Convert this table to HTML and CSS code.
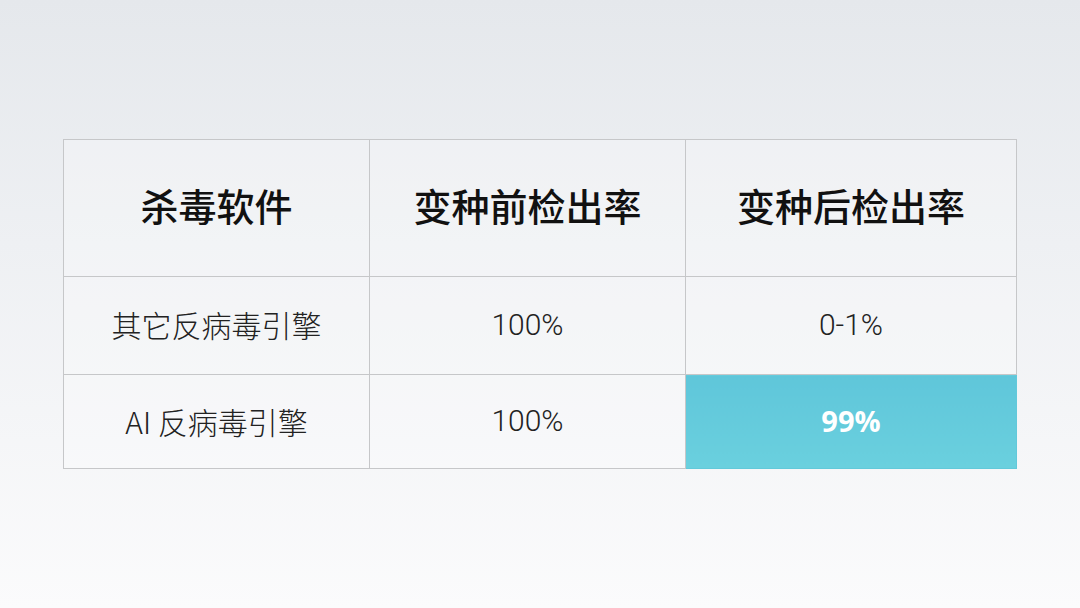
FILE: index.html
```html
<!DOCTYPE html>
<html lang="zh">
<head>
<meta charset="utf-8">
<link rel="stylesheet" href="styles.css">
</head>
<body>
<div class="page">
  <table class="cmp">
    <colgroup>
      <col class="c1"><col class="c2"><col class="c3">
    </colgroup>
    <thead>
      <tr class="head">
        <th>杀毒软件</th>
        <th>变种前检出率</th>
        <th>变种后检出率</th>
      </tr>
    </thead>
    <tbody>
      <tr class="r1">
        <td>其它反病毒引擎</td>
        <td class="num">100%</td>
        <td class="num">0-1%</td>
      </tr>
      <tr class="r2">
        <td>AI 反病毒引擎</td>
        <td class="num">100%</td>
        <td class="hl">99%</td>
      </tr>
    </tbody>
  </table>
</div>
</body>
</html>
```
FILE: styles.css
```css
html, body {
  margin: 0;
  padding: 0;
}
body {
  width: 1080px;
  height: 608px;
  background: linear-gradient(to bottom, #e5e8ec 0%, #eef0f3 40%, #fbfbfc 100%);
  font-family: "Noto Sans CJK SC", "Noto Sans", sans-serif;
  color: #1e1e1e;
  overflow: hidden;
}
.page {
  padding: 139px 0 0 63px;
}
.cmp {
  border-collapse: collapse;
  width: 953px;
  table-layout: fixed;
}
.c1 { width: 306px; }
.c2 { width: 316px; }
.c3 { width: 331px; }
.cmp th, .cmp td {
  border: 1px solid #c6c7c9;
  text-align: center;
  vertical-align: middle;
  padding: 0;
  background: rgba(255,255,255,0.25);
  box-sizing: border-box;
}
.head th {
  height: 137px;
  padding-bottom: 7px;
  font-size: 38px;
  font-weight: 500;
  color: #111;
}
.r1 td {
  height: 98px;
  padding-bottom: 3px;
}
.r2 td {
  height: 94px;
  padding-bottom: 2px;
}
.r1 td, .r2 td {
  font-size: 30px;
  font-weight: 300;
  color: #222;
}
.cmp td.num {
  font-family: Roboto, "Noto Sans", sans-serif;
  font-weight: 300;
  font-size: 30px;
}
.cmp td.hl {
  background: linear-gradient(to bottom, #5fc6da, #6ad0de);
  border-color: #62c9da;
  color: #fff;
  font-family: "Open Sans", "Noto Sans", sans-serif;
  font-weight: 700;
  font-size: 29px;
}
```
